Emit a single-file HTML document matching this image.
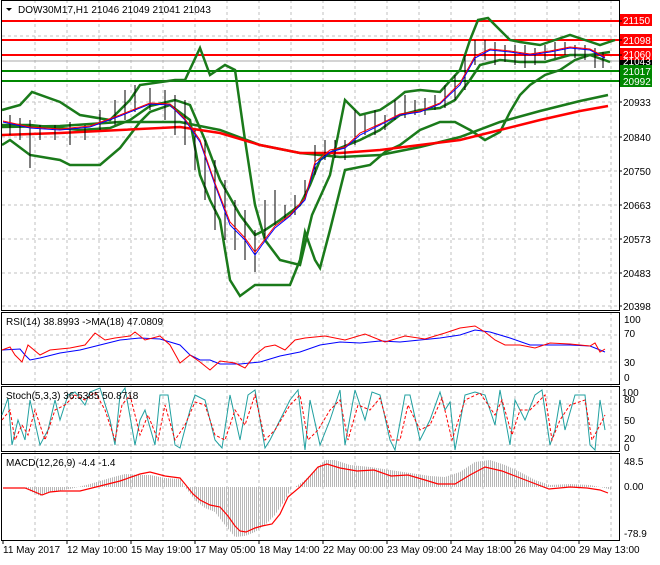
<!DOCTYPE html>
<html><head><style>
body{margin:0;background:#fff;font-family:"Liberation Sans",sans-serif;}
svg text{font-family:"Liberation Sans",sans-serif;font-size:10px;fill:#000}
</style></head><body>
<svg width="660" height="560" viewBox="0 0 660 560" xmlns="http://www.w3.org/2000/svg">
<defs>
<pattern id="hp" width="2" height="4" patternUnits="userSpaceOnUse"><rect x="0" y="0" width="1" height="4" fill="#b8b8b8"/></pattern>
</defs>
<rect width="660" height="560" fill="#fff"/>
<g stroke="#c0c0c0" stroke-dasharray="3,3" stroke-width="1">
<path d="M35 0V540M67 0V540M99 0V540M131 0V540M163 0V540M195 0V540M227 0V540M259 0V540M291 0V540M323 0V540M355 0V540M387 0V540M419 0V540M451 0V540M483 0V540M515 0V540M547 0V540M579 0V540M611 0V540"/>
<path d="M2 36H619M2 102H619M2 137H619M2 171H619M2 205H619M2 239H619M2 273H619M2 306H619"/>
<path d="M2 335H619M2 362H619M2 404H619M2 425H619M2 445H619"/>
</g>
<path d="M2 61H619" stroke="#aaa"/>
<g stroke-width="2">
<path d="M2 21H619M2 40H619M2 55H619" stroke="#f00"/>
<path d="M2 71H619M2 81H619" stroke="#080"/>
</g>
<g fill="none" stroke="#1a7a1a" stroke-width="2.5">
<path d="M2 110L20 105L32 92L60 102L80 115L110 120L130 100L140 85L175 80L185 80L200 48L210 75L225 65L235 70L245 140L255 205L265 240L280 260L300 265L312 215L330 175L345 100L360 115L380 110L395 100L405 92L420 90L440 92L460 70L470 40L478 20L488 18L500 30L510 40L520 42L540 45L555 40L570 35L585 40L600 45L615 40"/>
<path d="M2 145L10 140L30 155L60 160L70 165L100 165L120 148L140 122L150 112L170 105L190 120L200 175L210 200L220 220L230 280L240 296L255 285L270 285L290 285L300 260L305 232L315 260L320 268L330 230L345 170L355 168L370 165L385 152L400 145L420 130L440 122L455 122L470 130L485 140L500 132L510 112L520 95L530 85L545 75L560 70L575 60L590 55L610 52"/>
<path d="M2 125L30 125L60 128L80 130L110 128L130 120L150 106L175 100L190 105L205 140L220 180L240 215L255 235L265 230L280 220L300 205L310 185L320 160L335 150L360 140L380 130L400 115L420 110L440 108L455 100L470 80L480 65L500 60L520 62L545 62L570 55L590 55L610 62"/>
</g>
<path d="M2 127L60 126L120 122L180 122L220 130L260 145L300 153L340 157L380 155L420 147L460 137L500 122L540 111L580 101L608 95" fill="none" stroke="#1a7a1a" stroke-width="2.5"/>
<path d="M2 135L60 133L120 130L180 127L220 133L260 145L300 153L340 153L380 150L420 145L460 140L500 130L540 120L580 111L608 106" fill="none" stroke="#f00" stroke-width="2.5"/>
<g stroke="#000" stroke-width="1">
<path d="M10 115V135M20 118V140M30 120V168M40 125V140M55 125V140M70 122V145M85 125V140M100 110V130M115 100V125M125 90V120M135 85V112M150 88V110M165 90V120M175 95V135M185 100V145M195 130V170M205 140V200M215 160V230M225 180V240M235 200V250M245 210V260M255 230V272M265 200V240M275 190V225M285 205V220M295 195V215M305 180V200M315 145V175M325 140V160M335 140V158M345 140V160M355 110V145M365 115V135M375 110V135M385 115V130M395 100V120M405 95V118M415 100V115M425 98V115M435 95V110M445 85V108M455 75V100M465 55V90M475 40V65M485 40V60M495 42V65M505 45V62M515 45V65M525 45V68M535 48V65M545 45V60M555 42V58M565 42V55M575 45V58M585 45V60M595 48V68M603 52V68"/>
</g>
<path d="M3 122L30 128L60 130L90 127L120 116L150 104L170 105L185 120L200 142L215 185L230 225L245 240L255 255L262 245L275 228L290 216L305 200L315 165L330 152L345 148L360 135L380 125L400 115L420 112L440 104L460 85L475 58L490 50L510 52L530 55L550 52L570 48L590 50L605 58" fill="none" stroke="#00f" stroke-width="1"/>
<path d="M3 121L30 127L60 129L90 126L120 115L150 103L170 104L185 119L200 140L215 183L230 222L245 238L255 252L262 243L275 226L290 215L305 198L315 162L330 150L345 147L360 133L380 124L400 114L420 111L440 103L460 83L475 56L490 49L510 51L530 54L550 51L570 47L590 49L605 57" fill="none" stroke="#f00" stroke-width="1"/>
<g fill="none" stroke="#000" stroke-width="1">
<rect x="1.5" y="0.5" width="618" height="310"/>
<rect x="1.5" y="312.5" width="618" height="72"/>
<rect x="1.5" y="386.5" width="618" height="65"/>
<rect x="1.5" y="453.5" width="618" height="87"/>
</g>
<!-- RSI -->
<path d="M2 350L20 349L25 355L30 360L40 358L60 353L80 350L100 345L120 340L140 338L160 339L180 345L190 355L200 360L210 360L220 364L240 364L260 362L280 356L300 352L320 345L340 342L360 343L380 341L400 342L420 340L440 338L460 335L475 330L490 332L510 338L530 345L550 345L570 345L590 346L605 352" fill="none" stroke="#00f" stroke-width="1"/>
<path d="M2 350L10 347L15 355L22 362L28 345L40 355L50 350L70 348L85 345L95 333L105 340L115 338L130 336L135 332L145 340L160 336L170 345L180 363L190 355L200 362L210 370L220 361L235 363L245 368L255 355L265 347L275 345L285 350L295 340L305 338L325 336L345 340L365 334L385 342L405 336L425 339L445 333L460 328L475 326L485 332L495 340L505 345L520 345L535 348L550 343L570 344L590 346L595 343L600 352L605 349" fill="none" stroke="#f00" stroke-width="1"/>
<!-- Stoch -->
<path d="M2 415L8 398L12 445L18 420L25 440L30 400L40 445L48 430L55 400L60 420L68 395L75 392L85 405L90 392L100 388L110 420L115 445L120 395L125 388L135 445L140 420L145 410L155 445L160 395L168 395L175 445L180 448L190 410L195 395L205 400L210 420L215 440L222 448L230 395L240 440L248 395L255 390L265 448L270 440L280 420L290 400L298 390L305 450L310 400L320 445L330 420L340 390L345 445L355 390L365 420L372 392L380 395L390 440L395 450L405 395L410 395L420 440L430 420L440 392L445 410L450 402L455 450L465 395L475 392L485 395L495 425L500 390L510 445L515 400L525 420L535 395L542 390L550 445L555 430L560 400L565 430L575 395L585 395L590 445L595 450L600 400L605 430" fill="none" stroke="#20a0a0" stroke-width="1"/>
<path d="M2 420L10 410L15 440L22 425L28 435L35 410L45 440L55 410L65 405L75 395L85 400L95 392L105 410L115 440L122 405L130 395L140 435L148 415L158 440L165 405L175 440L185 425L195 402L205 405L215 435L225 440L235 410L245 425L255 395L265 440L275 430L290 405L300 395L308 440L318 430L330 410L340 400L348 440L358 405L370 410L380 398L392 440L400 440L408 405L420 430L430 425L442 398L452 440L465 400L480 393L495 415L502 400L512 435L520 410L530 410L545 395L552 440L560 420L570 405L585 400L592 440L600 425L605 415" fill="none" stroke="#f00" stroke-width="1" stroke-dasharray="3,2"/>
<!-- MACD histogram -->
<path d="M2 487L25 487L30 491L40 496L50 492L70 489L90 484L110 478L125 474L140 475L150 475L165 478L180 479L185 487Z" fill="url(#hp)"/>
<path d="M185 487L195 500L205 508L215 512L225 525L235 537L245 536L255 532L265 525L275 515L285 500L292 487Z" fill="url(#hp)"/>
<path d="M295 487L305 480L315 470L325 460L335 460L350 465L370 467L390 470L410 473L430 476L445 477L460 472L475 462L490 460L505 465L520 472L535 480L550 485L570 484L590 485L605 488L612 490L612 487Z" fill="url(#hp)"/>
<path d="M3 488L25 488L35 492L42 495L50 492L60 491L80 491L100 486L120 481L140 474L150 472L165 476L180 478L185 484L193 494L200 500L210 505L220 507L228 516L235 526L240 531L246 532L255 528L262 526L272 524L280 514L288 497L300 487L310 476L318 467L327 464L340 468L357 471L374 470L391 476L408 475L425 480L438 484L455 484L470 475L485 467L502 471L515 476L528 481L549 489L570 487L587 488L600 490L608 493" fill="none" stroke="#f00" stroke-width="1.2"/>
<path d="M6 8L12 8L9 11Z" fill="#000"/>
<text x="18" y="13">DOW30M17,H1  21046 21049 21041 21043</text>
<text x="6" y="325">RSI(14) 38.8993  -&gt;MA(18) 47.0809</text>
<text x="6" y="399">Stoch(5,3,3) 36.5385 50.8718</text>
<text x="6" y="466">MACD(12,26,9) -4.4 -1.4</text>
<g>
<rect x="620" y="14" width="32" height="12" fill="#f00"/><text x="623" y="24" style="fill:#fff">21150</text>
<rect x="620" y="34" width="32" height="12" fill="#f00"/><text x="623" y="44" style="fill:#fff">21098</text>
<rect x="620" y="48" width="32" height="12" fill="#f00"/><text x="623" y="58" style="fill:#fff">21060</text>
<rect x="620" y="60" width="32" height="6" fill="#000"/><text x="623" y="65" style="fill:#fff">21043</text>
<rect x="620" y="65" width="32" height="12" fill="#080"/><text x="623" y="75" style="fill:#fff">21017</text>
<rect x="620" y="75" width="32" height="12" fill="#080"/><text x="623" y="85" style="fill:#fff">20992</text>
<text x="623" y="106">20933</text><text x="623" y="141">20840</text><text x="623" y="175">20750</text>
<text x="623" y="209">20663</text><text x="623" y="243">20573</text><text x="623" y="277">20483</text><text x="623" y="310">20398</text>
<text x="624" y="323">100</text><text x="624" y="337">70</text><text x="624" y="366">30</text><text x="624" y="381">0</text>
<text x="622" y="396">100</text><text x="624" y="403">80</text><text x="624" y="424">50</text><text x="624" y="442">20</text><text x="624" y="451">0</text>
<text x="624" y="465">48.5</text><text x="624" y="490">0.00</text><text x="624" y="537">-78.9</text>
</g>
<g stroke="#000"><path d="M619 21h3M619 40h3M619 55h3M619 102h3M619 137h3M619 171h3M619 205h3M619 239h3M619 273h3M619 306h3M3 541v3M67 541v3M131 541v3M195 541v3M259 541v3M323 541v3M387 541v3M451 541v3M515 541v3M579 541v3"/></g>
<text x="3" y="553">11 May 2017</text><text x="67" y="553">12 May 10:00</text><text x="131" y="553">15 May 19:00</text>
<text x="195" y="553">17 May 05:00</text><text x="259" y="553">18 May 14:00</text><text x="323" y="553">22 May 00:00</text>
<text x="387" y="553">23 May 09:00</text><text x="451" y="553">24 May 18:00</text><text x="515" y="553">26 May 04:00</text>
<text x="579" y="553">29 May 13:00</text>
</svg>
</body></html>
